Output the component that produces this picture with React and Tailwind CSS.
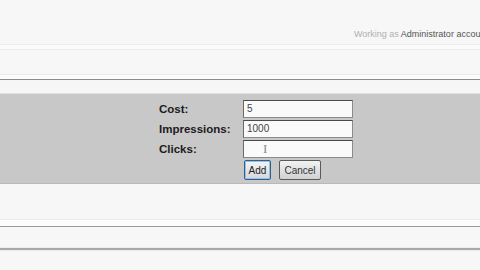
import React from 'react'

function Field({label, value, cursor}){
  return (
    <div className="flex items-center h-[18px] mb-[2px]">
      <div className="w-[84px] font-bold text-[11.5px] text-[#1c1c1c] pt-[1px]">{label}</div>
      <div className="relative w-[110px] h-[18px] bg-[#fafafa] border border-[#8a8a8a] border-t-[#4a4a4a] border-l-[#6a6a6a] text-[10px] text-[#444] pl-[3px] leading-[16px]">
        {value}
        {cursor && <span className="absolute left-[19px] top-[1px] text-[13px] text-[#8a8a8a] leading-[14px]" style={{fontFamily:'"Liberation Serif", serif'}}>I</span>}
      </div>
    </div>
  )
}

export default function App(){
  return (
    <div className="w-[480px] h-[270px] overflow-hidden bg-[#f7f7f7] flex flex-col" style={{fontFamily:'"Liberation Sans", Arial, sans-serif'}}>
      <div className="h-[44px] shrink-0 pl-[354px] pt-[28px] whitespace-nowrap overflow-hidden text-[9px] leading-[12px]">
        <span className="text-[#b0b0b0]">Working as </span><span className="text-[#555]">Administrator account</span>
      </div>
      <div className="h-[6px] shrink-0 border-t border-[#ececec] border-b border-b-[#e9e9e9] bg-[#fbfbfb]"></div>
      <div className="h-[25px] shrink-0 border-b border-[#ebebeb]"></div>
      <div className="h-[4px] shrink-0 bg-[#fbfbfb]"></div>
      <div className="h-[1px] shrink-0 bg-[#8c8c8c]"></div>
      <div className="h-[14px] shrink-0 bg-[#f6f6f6] border-b border-[#e2e2e2]"></div>
      <div className="h-[90px] shrink-0 bg-[#c8c8c8] pl-[159px] pt-[6px] border-b border-[#b9b9b9]">
        <Field label="Cost:" value="5" />
        <Field label="Impressions:" value="1000" />
        <Field label="Clicks:" value="" cursor />
        <div className="flex gap-[8px] pl-[85px]">
          <button className="w-[27px] h-[20px] rounded-[2px] border border-[#2f5f8f] bg-gradient-to-b from-[#f4f4f4] to-[#d4d8dc] text-[10px] text-[#222] shadow-[inset_0_0_0_1px_#9cc0e0]">Add</button>
          <button className="w-[42px] h-[20px] rounded-[2px] border border-[#5a5a5a] bg-gradient-to-b from-[#f2f2f2] to-[#d2d2d2] text-[10px] text-[#333]">Cancel</button>
        </div>
      </div>
      <div className="h-[36px] shrink-0 border-b border-[#ececec]"></div>
      <div className="h-[6px] shrink-0 bg-[#fcfcfc]"></div>
      <div className="h-[1px] shrink-0 bg-[#9a9a9a]"></div>
      <div className="h-[21px] shrink-0 border-b border-[#ededed]"></div>
      <div className="h-[2px] shrink-0 bg-[#a8a8a8]"></div>
      <div className="flex-1 bg-[#f7f7f7] border-t border-[#ececec]"></div>
    </div>
  )
}
